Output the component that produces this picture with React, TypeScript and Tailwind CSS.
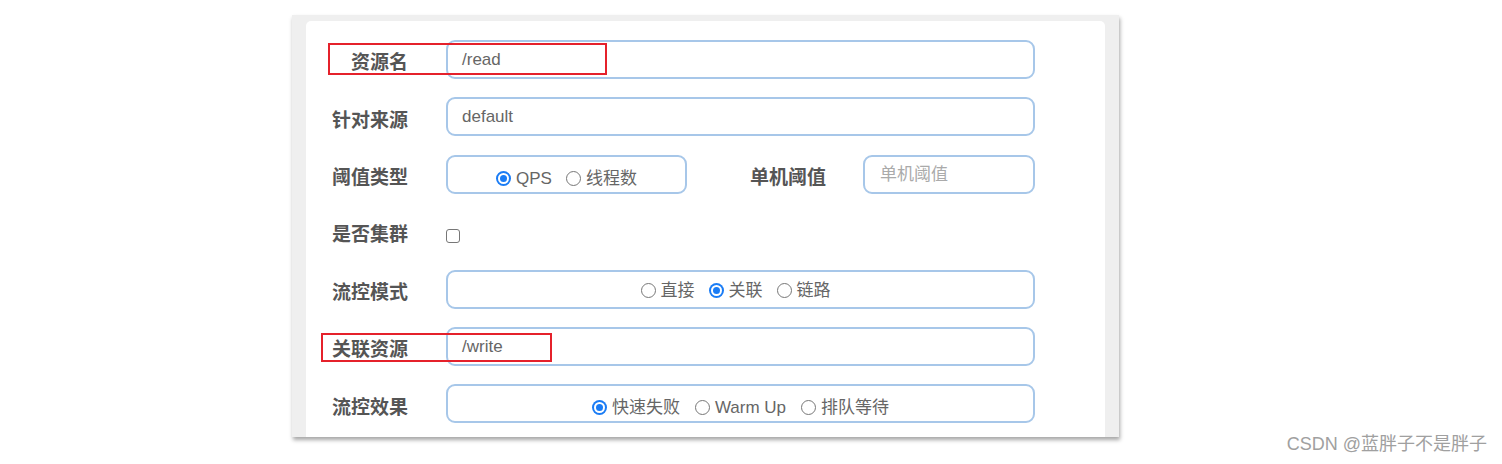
import React from "react";

const font = { fontFamily: '"Liberation Sans", "Noto Sans CJK SC", sans-serif' };

function Radio({ checked, label }: { checked?: boolean; label: string }) {
  return (
    <span className="flex items-center gap-[5px]">
      {checked ? (
        <span className="flex h-[15px] w-[15px] items-center justify-center rounded-full bg-[#1a7cf5]">
          <span className="flex h-[11px] w-[11px] items-center justify-center rounded-full bg-white">
            <span className="h-[7px] w-[7px] rounded-full bg-[#1a7cf5]" />
          </span>
        </span>
      ) : (
        <span className="h-[15px] w-[15px] rounded-full border-[1.5px] border-[#777] bg-white" />
      )}
      <span>{label}</span>
    </span>
  );
}

function Label({ children }: { children: React.ReactNode }) {
  return (
    <div className="w-[102px] shrink-0 pt-[8px] text-right text-[19px] font-bold text-[#555]">{children}</div>
  );
}

const box = "h-[39px] rounded-[9px] border-2 border-[#a7c7e9] bg-white";

export default function App() {
  return (
    <div className="relative h-[464px] w-[1502px] bg-white" style={font}>
      <div className="pl-[292px] pt-[15px]">
        <div className="relative h-[422px] w-[827px] bg-[#efefef] px-[14px] pt-[6px] shadow-[1px_3px_4px_rgba(0,0,0,0.35)]">
          <div className="flex h-[416px] flex-col gap-[18.4px] rounded-t-[5px] bg-white pt-[19px]">
            <div className="flex h-[39px] items-center gap-[38px]">
              <Label>资源名</Label>
              <div className={`${box} flex w-[589px] items-center pl-[14px] text-[17px] text-[#666]`}>/read</div>
            </div>
            <div className="flex h-[39px] items-center gap-[38px]">
              <Label>针对来源</Label>
              <div className={`${box} flex w-[589px] items-center pl-[14px] text-[17px] text-[#666]`}>default</div>
            </div>
            <div className="flex h-[39px] items-center gap-[38px]">
              <Label>阈值类型</Label>
              <div className={`${box} flex w-[241px] items-center justify-center gap-[14px] pt-[8px] text-[17px] text-[#666]`}>
                <Radio checked label="QPS" />
                <Radio label="线程数" />
              </div>
              <div className="flex items-center gap-[37px]">
                <div className="w-[101px] pt-[8px] text-right text-[19px] font-bold text-[#555]">单机阈值</div>
                <div className={`${box} flex w-[172px] items-center pl-[15px] text-[17px] text-[#aaa]`}>单机阈值</div>
              </div>
            </div>
            <div className="flex h-[39px] items-center gap-[38px]">
              <Label>是否集群</Label>
              <span className="mt-[9px] h-[14px] w-[14px] rounded-[3px] border-[1.5px] border-[#777] bg-white" />
            </div>
            <div className="flex h-[39px] items-center gap-[38px]">
              <Label>流控模式</Label>
              <div className={`${box} flex w-[589px] items-center justify-center gap-[14px] pr-[10px] pt-[3px] text-[17px] text-[#666]`}>
                <Radio label="直接" />
                <Radio checked label="关联" />
                <Radio label="链路" />
              </div>
            </div>
            <div className="flex h-[39px] items-center gap-[38px]">
              <Label>关联资源</Label>
              <div className={`${box} flex w-[589px] items-center pl-[14px] text-[17px] text-[#666]`}>/write</div>
            </div>
            <div className="flex h-[39px] items-center gap-[38px]">
              <Label>流控效果</Label>
              <div className={`${box} flex w-[589px] items-center justify-center gap-[15px] pt-[8px] text-[17px] text-[#666]`}>
                <Radio checked label="快速失败" />
                <Radio label="Warm Up" />
                <Radio label="排队等待" />
              </div>
            </div>
          </div>
          <div className="absolute left-[36px] top-[28px] h-[32px] w-[279px] border-2 border-[#e5212b]" />
          <div className="absolute left-[29px] top-[318px] h-[29px] w-[231px] border-2 border-[#e5212b]" />
        </div>
      </div>
      <div className="absolute right-[15px] top-[431px] text-[18px] text-[#a0a0a0]">CSDN @蓝胖子不是胖子</div>
    </div>
  );
}
